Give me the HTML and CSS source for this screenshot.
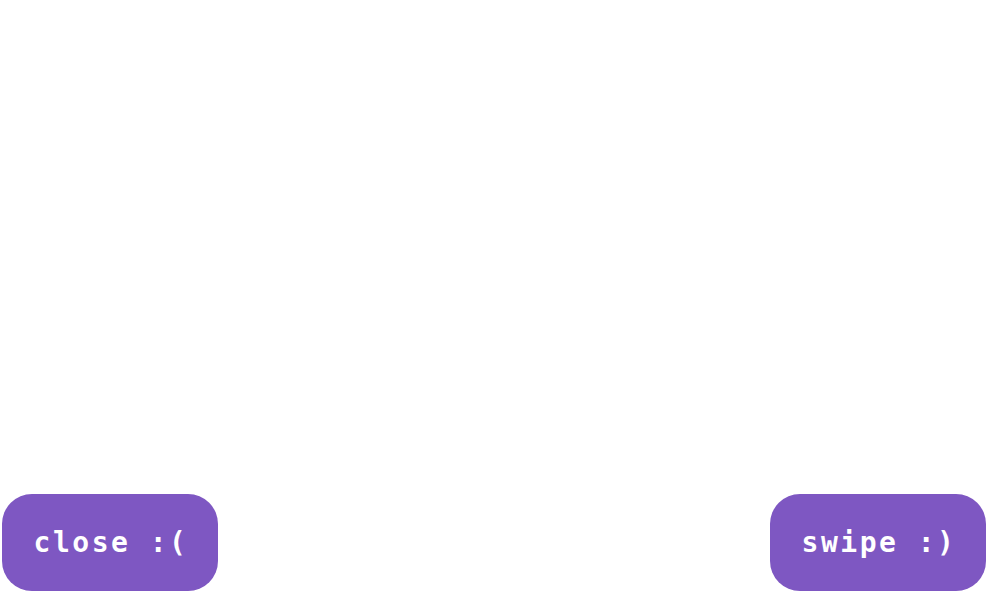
FILE: index.html
```html
<!DOCTYPE html>
<html>
<head>
<meta charset="utf-8">
<link rel="stylesheet" href="styles.css">
</head>
<body>
<div class="screen">
  <div class="bar">
    <button class="btn">close :(</button>
    <button class="btn">swipe :)</button>
  </div>
</div>
</body>
</html>
```
FILE: styles.css
```css
html, body {
  margin: 0;
  padding: 0;
  background: #ffffff;
}
.screen {
  width: 988px;
  height: 594px;
  display: flex;
  flex-direction: column;
  justify-content: flex-end;
  box-sizing: border-box;
  padding: 0 2px 3px 2px;
}
.bar {
  display: flex;
  justify-content: space-between;
  align-items: flex-end;
}
.btn {
  width: 216px;
  height: 97px;
  border: none;
  border-radius: 30px;
  background: #7e57c2;
  color: #ffffff;
  font-family: "DejaVu Sans Mono", "Liberation Mono", monospace;
  font-weight: bold;
  font-size: 28px;
  letter-spacing: 2.5px;
  padding: 0 0 0 2px;
  margin: 0;
}
```
